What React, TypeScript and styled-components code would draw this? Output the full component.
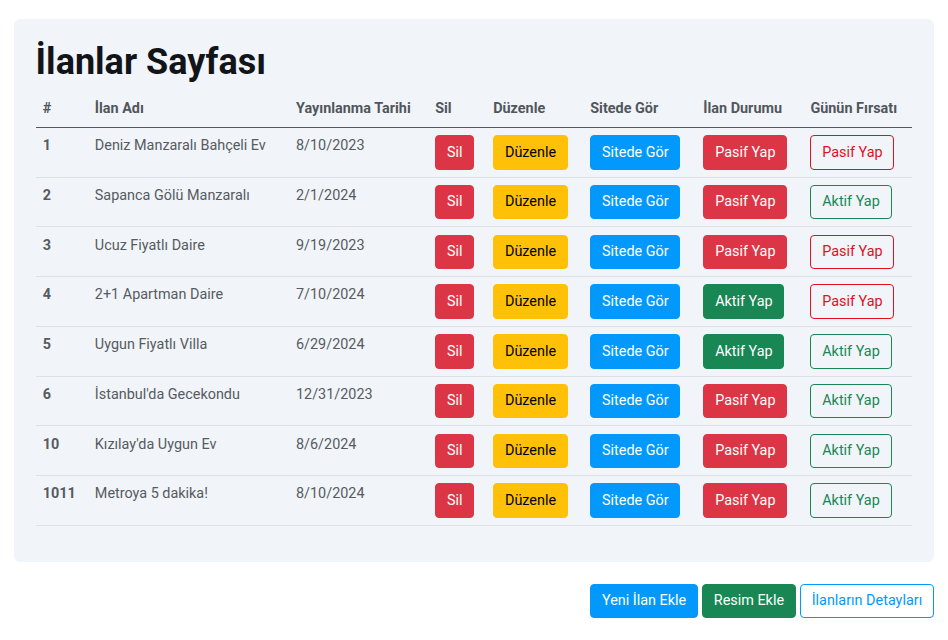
import React from "react";
import styled, { createGlobalStyle, css } from "styled-components";

const GlobalStyle = createGlobalStyle`
  html, body { margin: 0; padding: 0; background: #ffffff; }
  body { font-family: Roboto, "Liberation Sans", Arial, sans-serif; font-size: 14.4px; color: #212529; }
  * { box-sizing: border-box; }
`;

const Page = styled.div`
  padding: 19px 14px 0 14px;
  width: 948px;
`;

const Panel = styled.section`
  background: #f1f5f9;
  border-radius: 6px;
  padding: 21.6px;
`;

const Title = styled.h1`
  margin: 0 0 7.2px 0;
  font-size: 36px;
  line-height: 43.2px;
  font-weight: 700;
  color: #111418;
`;

const Table = styled.table`
  width: 100%;
  border-collapse: collapse;
  table-layout: fixed;
  margin-bottom: 14.4px;
`;

const Th = styled.th<{ $w: number }>`
  width: ${(p) => p.$w}px;
  text-align: left;
  font-weight: 700;
  color: #51565c;
  padding: 7.2px;
  line-height: 21.6px;
  border-bottom: 1px solid #55595e;
  white-space: nowrap;
`;

const Tr = styled.tr`
  border-bottom: 1px solid #dde1e6;
`;

const Td = styled.td<{ $bold?: boolean }>`
  vertical-align: top;
  padding: 7.2px;
  line-height: 21.6px;
  color: #565b61;
  font-weight: ${(p) => (p.$bold ? 700 : 400)};
  white-space: nowrap;
`;

type Variant = "danger" | "warning" | "info" | "success" | "outlineDanger" | "outlineSuccess" | "outlineInfo";

const variants: Record<Variant, ReturnType<typeof css>> = {
  danger: css`background: #dc3545; border-color: #dc3545; color: #fff;`,
  warning: css`background: #ffc107; border-color: #ffc107; color: #000;`,
  info: css`background: #0399fc; border-color: #0399fc; color: #fff;`,
  success: css`background: #198754; border-color: #198754; color: #fff;`,
  outlineDanger: css`background: transparent; border-color: #e0101f; color: #e0101f;`,
  outlineSuccess: css`background: transparent; border-color: #198754; color: #198754;`,
  outlineInfo: css`background: #fff; border-color: #0399fc; color: #0399fc;`,
};

const Button = styled.button<{ $v: Variant }>`
  font-family: Roboto, "Liberation Sans", Arial, sans-serif;
  font-size: 14.4px;
  font-weight: 400;
  line-height: 21.6px;
  padding: 5.4px 10.8px;
  border: 1px solid transparent;
  border-radius: 4px;
  white-space: nowrap;
  cursor: pointer;
  ${(p) => variants[p.$v]}
`;

const Actions = styled.div`
  display: flex;
  justify-content: flex-end;
  gap: 4px;
  margin-top: 22px;
`;

type Row = { id: string; name: string; date: string; active: boolean; deal: boolean };

const rows: Row[] = [
  { id: "1", name: "Deniz Manzaralı Bahçeli Ev", date: "8/10/2023", active: true, deal: true },
  { id: "2", name: "Sapanca Gölü Manzaralı", date: "2/1/2024", active: true, deal: false },
  { id: "3", name: "Ucuz Fiyatlı Daire", date: "9/19/2023", active: true, deal: true },
  { id: "4", name: "2+1 Apartman Daire", date: "7/10/2024", active: false, deal: true },
  { id: "5", name: "Uygun Fiyatlı Villa", date: "6/29/2024", active: false, deal: false },
  { id: "6", name: "İstanbul'da Gecekondu", date: "12/31/2023", active: true, deal: false },
  { id: "10", name: "Kızılay'da Uygun Ev", date: "8/6/2024", active: true, deal: false },
  { id: "1011", name: "Metroya 5 dakika!", date: "8/10/2024", active: true, deal: false },
];

const headers: [string, number][] = [
  ["#", 52],
  ["İlan Adı", 201],
  ["Yayınlanma Tarihi", 139],
  ["Sil", 58],
  ["Düzenle", 97],
  ["Sitede Gör", 113],
  ["İlan Durumu", 107],
  ["Günün Fırsatı", 109],
];

export default function App() {
  return (
    <>
      <GlobalStyle />
      <Page>
        <Panel>
          <Title>İlanlar Sayfası</Title>
          <Table>
            <thead>
              <tr>
                {headers.map(([h, w]) => (
                  <Th key={h} $w={w}>{h}</Th>
                ))}
              </tr>
            </thead>
            <tbody>
              {rows.map((r) => (
                <Tr key={r.id}>
                  <Td $bold>{r.id}</Td>
                  <Td>{r.name}</Td>
                  <Td>{r.date}</Td>
                  <Td><Button $v="danger">Sil</Button></Td>
                  <Td><Button $v="warning">Düzenle</Button></Td>
                  <Td><Button $v="info">Sitede Gör</Button></Td>
                  <Td>
                    {r.active ? (
                      <Button $v="danger">Pasif Yap</Button>
                    ) : (
                      <Button $v="success">Aktif Yap</Button>
                    )}
                  </Td>
                  <Td>
                    {r.deal ? (
                      <Button $v="outlineDanger">Pasif Yap</Button>
                    ) : (
                      <Button $v="outlineSuccess">Aktif Yap</Button>
                    )}
                  </Td>
                </Tr>
              ))}
            </tbody>
          </Table>
        </Panel>
        <Actions>
          <Button $v="info">Yeni İlan Ekle</Button>
          <Button $v="success">Resim Ekle</Button>
          <Button $v="outlineInfo">İlanların Detayları</Button>
        </Actions>
      </Page>
    </>
  );
}
